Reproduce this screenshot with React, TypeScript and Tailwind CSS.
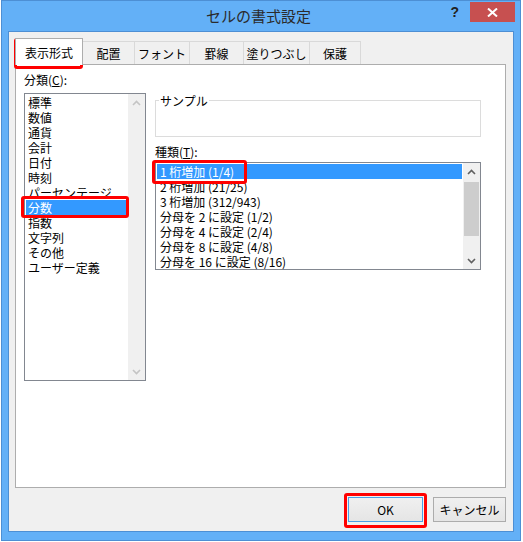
import React from "react";

const categories = [
  "標準",
  "数値",
  "通貨",
  "会計",
  "日付",
  "時刻",
  "パーセンテージ",
  "分数",
  "指数",
  "文字列",
  "その他",
  "ユーザー定義",
];

const types = [
  "1 桁増加 (1/4)",
  "2 桁増加 (21/25)",
  "3 桁増加 (312/943)",
  "分母を 2 に設定 (1/2)",
  "分母を 4 に設定 (2/4)",
  "分母を 8 に設定 (4/8)",
  "分母を 16 に設定 (8/16)",
];

const tabs = [
  { label: "配置", w: "w-[52px]" },
  { label: "フォント", w: "w-[55px]" },
  { label: "罫線", w: "w-[54px]" },
  { label: "塗りつぶし", w: "w-[66px]" },
  { label: "保護", w: "w-[51px]" },
];

function Chevron({ up, color }: { up?: boolean; color: string }) {
  return (
    <svg width="9" height="6" viewBox="0 0 9 6">
      <polyline
        points={up ? "1,5 4.5,1.5 8,5" : "1,1 4.5,4.5 8,1"}
        fill="none"
        stroke={color}
        strokeWidth="1.6"
      />
    </svg>
  );
}

function Scrollbar({ active }: { active?: boolean }) {
  const color = active ? "#606060" : "#c4c4c4";
  return (
    <div className="w-[17px] h-full bg-[#f0f0f0] flex flex-col">
      <div className="h-[17px] flex items-center justify-center">
        <Chevron up color={color} />
      </div>
      <div className="flex-1 pt-[2px]">
        {active && <div className="mx-[1px] h-[54px] bg-[#cdcdcd]" />}
      </div>
      <div className="h-[17px] flex items-center justify-center">
        <Chevron color={color} />
      </div>
    </div>
  );
}

function RedBox({ className }: { className: string }) {
  return (
    <div
      className={`absolute border-[3px] border-[#ff0000] rounded-[3px] pointer-events-none ${className}`}
    />
  );
}

export default function App() {
  return (
    <div className="relative w-[523px] h-[542px] bg-white overflow-hidden font-['Noto_Sans_CJK_JP','Noto_Sans',sans-serif] text-[12px] leading-[15px] text-black">
      <div className="ml-[1px] w-[520px] h-[541px] bg-[#63b0f7] border border-[#4d8fd4] flex flex-col">
        {/* title bar */}
        <div className="h-[30px] flex">
          <div className="flex-1" />
          <div className="pt-[5px] text-[15px] leading-[20px] text-[#2b2b2b]">セルの書式設定</div>
          <div className="flex-1 flex justify-end items-start pr-[5px]">
            <span className="mt-[3px] mr-[11px] font-['Liberation_Sans',sans-serif] font-bold text-[14px] leading-[16px] text-[#222]">
              ?
            </span>
            <div className="mt-[1px] w-[45px] h-[20px] bg-[#c75050] flex items-center justify-center">
              <svg width="11" height="9" viewBox="0 0 11 9">
                <path d="M1 0.5 L10 8.5 M10 0.5 L1 8.5" stroke="#fff" strokeWidth="2" />
              </svg>
            </div>
          </div>
        </div>

        {/* client area */}
        <div className="mx-[6px] h-[501px] border border-[#4d8fd4] bg-[#f0f0f0] pt-[6px] pl-[6px] flex flex-col">
          {/* tabs */}
          <div className="relative z-10 h-[27px] mb-[-1px] flex items-end">
            <div className="w-[68px] h-[27px] bg-white border border-b-0 border-[#adadad] flex items-center justify-center pt-[1px]">
              表示形式
            </div>
            {tabs.map((t) => (
              <div
                key={t.label}
                className={`${t.w} h-[23px] mb-[1px] border-t border-r border-[#d9d9d9] bg-[#f0f0f0] flex items-center justify-center`}
              >
                {t.label}
              </div>
            ))}
          </div>

          {/* tab panel */}
          <div className="w-[491px] h-[424px] bg-white border border-[#adadad] pt-[7px] pl-[8px] flex gap-[9px]">
            <div className="flex flex-col">
              <div>
                分類(<u>C</u>):
              </div>
              <div className="mt-[6px] w-[122px] h-[288px] border border-[#828790] flex">
                <div className="flex-1 pt-[1px] px-[1px]">
                  {categories.map((c) => (
                    <div
                      key={c}
                      className={`h-[15px] pl-[2px] whitespace-nowrap overflow-hidden ${
                        c === "分数" ? "bg-[#3399ff] text-white" : ""
                      }`}
                    >
                      {c}
                    </div>
                  ))}
                </div>
                <Scrollbar />
              </div>
            </div>

            <div className="pt-[21px] flex flex-col">
              <fieldset className="w-[326px] h-[44px] border border-[#dcdcdc]">
                <legend className="ml-[3px] px-[1px] leading-[15px]">サンプル</legend>
              </fieldset>
              <div className="mt-[7px]">
                種類(<u>T</u>):
              </div>
              <div className="mt-[3px] w-[326px] h-[108px] border border-[#828790] flex">
                <div className="flex-1 pt-[1px] px-[1px]">
                  {types.map((t, i) => (
                    <div
                      key={t}
                      className={`h-[15px] pl-[3px] whitespace-nowrap ${
                        i === 0 ? "bg-[#3399ff] text-white" : ""
                      }`}
                    >
                      {t}
                    </div>
                  ))}
                </div>
                <Scrollbar active />
              </div>
            </div>
          </div>

          {/* buttons */}
          <div className="mt-[9px] pr-[7px] flex justify-end gap-[10px]">
            <button className="w-[75px] h-[25px] border border-[#4a9ee6] bg-gradient-to-b from-[#f0f0f0] to-[#e5e5e5] flex items-center justify-center">
              OK
            </button>
            <button className="w-[73px] h-[25px] border border-[#acacac] bg-gradient-to-b from-[#f0f0f0] to-[#e5e5e5] flex items-center justify-center">
              キャンセル
            </button>
          </div>
        </div>
      </div>

      {/* annotation boxes */}
      <RedBox className="left-[14px] top-[38px] w-[69px] h-[31px]" />
      <RedBox className="left-[21px] top-[196px] w-[108px] h-[22px]" />
      <RedBox className="left-[152px] top-[160px] w-[95px] h-[24px]" />
      <RedBox className="left-[344px] top-[493px] w-[83px] h-[35px]" />
    </div>
  );
}
